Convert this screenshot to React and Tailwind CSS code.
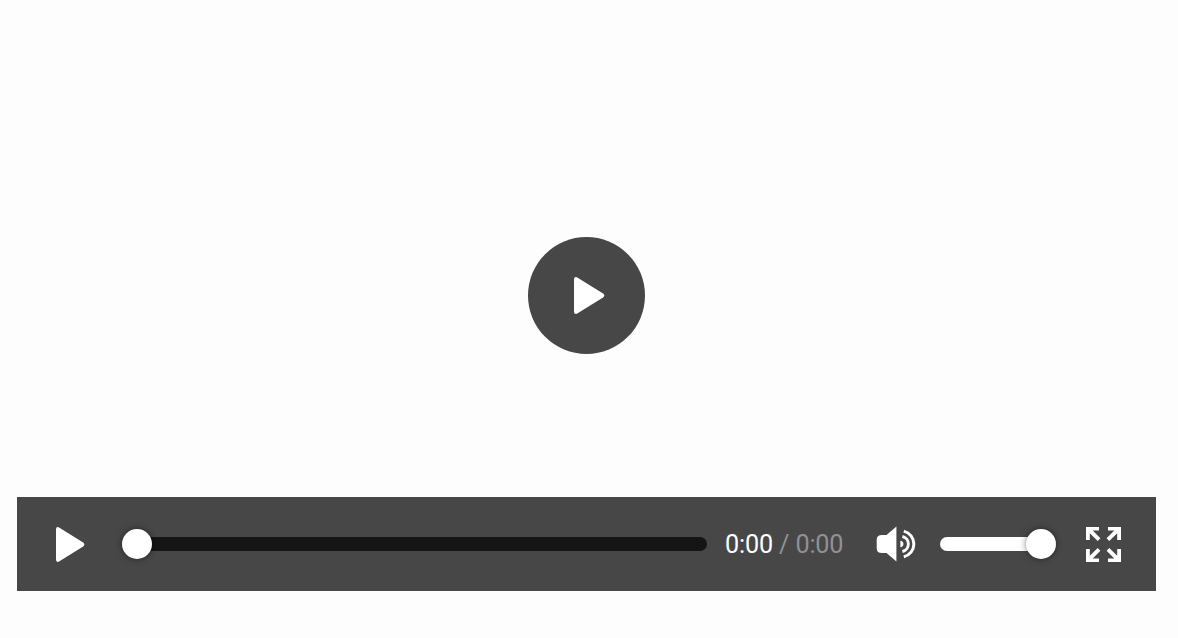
function PlayIcon({ className }) {
  return (
    <svg className={className} viewBox="0 0 30 36" preserveAspectRatio="none" fill="white">
      <path d="M0 2.2Q0 0 1.8 0Q2.5 0 3.2 .4L28.6 16Q31 18 28.6 20L3.2 35.6Q2.5 36 1.8 36Q0 36 0 33.8Z" />
    </svg>
  );
}

function VolumeIcon() {
  return (
    <svg className="h-[36px] w-[40px]" viewBox="0 0 40 36" fill="none">
      <path d="M20.4 .5V35.5L10.5 27H6C2.5 27 .7 25.5 .7 22.5V13.5C.7 10.5 2.5 9 6 9H10.5Z" fill="white" />
      <path d="M27.8 5.1A13.3 13.3 0 0 1 27.8 30.9" stroke="white" strokeWidth="3" />
      <path d="M26.4 10.5A7.7 7.7 0 0 1 26.4 25.5" stroke="white" strokeWidth="2.9" />
      <path d="M24.8 15A3.1 3.1 0 0 1 24.8 21Z" fill="white" stroke="white" strokeWidth=".8" />
    </svg>
  );
}

function ExpandIcon() {
  return (
    <svg className="h-[35px] w-[35px]" viewBox="0 0 35 35" fill="white">
      <path d="M0 0H13V3.6H6.7L14.4 11.3L11.7 14.1L3.8 6.3V13H0Z" />
      <path d="M35 0V13H31.2V6.3L23.3 14.1L20.6 11.3L28.3 3.6H22V0Z" />
      <path d="M0 35V22H3.8V28.7L11.7 20.9L14.4 23.7L6.7 31.4H13V35Z" />
      <path d="M35 35H22V31.4H28.3L20.6 23.7L23.3 20.9L31.2 28.7V22H35Z" />
    </svg>
  );
}

export default function App() {
  return (
    <div className="flex h-[638px] w-[1178px] flex-col overflow-hidden bg-[#fdfdfd] pl-[17px] pr-[22px] font-['Roboto',sans-serif]">
      <main className="flex h-[497px] shrink-0 justify-center pt-[237px]">
        <button aria-label="Play video" className="flex h-[117px] w-[117px] items-center rounded-full bg-[#474747] pl-[46px]">
          <PlayIcon className="h-[37px] w-[30.5px]" />
        </button>
      </main>
      <div className="flex h-[94px] shrink-0 items-center bg-[#474747] pl-[39px]">
        <button aria-label="Play">
          <PlayIcon className="h-[35px] w-[28.5px]" />
        </button>
        <div className="ml-[37.5px] flex w-[585px] items-center">
          <div className="z-10 h-[30px] w-[30px] shrink-0 rounded-full bg-white shadow-[0_0_6px_rgba(0,0,0,0.5)]" />
          <div className="-ml-[15px] h-[14px] grow rounded-r-full bg-[#151515]" />
        </div>
        <div className="ml-[18px] w-[120px] whitespace-pre pt-[2px] text-[25.2px] leading-[30px] tracking-[-0.15px] text-white">
          0:00<span className="text-[#919191]"> / 0:00</span>
        </div>
        <button aria-label="Volume" className="ml-[31px]">
          <VolumeIcon />
        </button>
        <div className="ml-[24px] flex w-[116px] items-center">
          <div className="-mr-[15px] h-[14px] grow rounded-l-full bg-white" />
          <div className="z-10 h-[30px] w-[30px] shrink-0 rounded-full bg-white shadow-[0_0_6px_rgba(0,0,0,0.5)]" />
        </div>
        <button aria-label="Fullscreen" className="ml-[30px]">
          <ExpandIcon />
        </button>
      </div>
    </div>
  );
}
